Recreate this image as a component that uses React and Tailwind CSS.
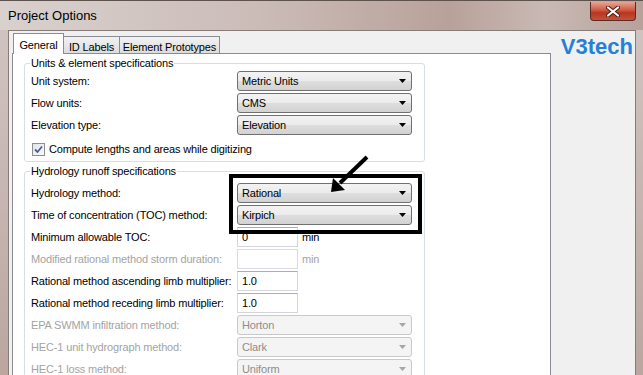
import React from 'react';

function Select({ value, disabled }) {
    return (
        <div
            className={`w-[175px] h-[20px] shrink-0 rounded-[3px] border flex items-center justify-between pl-[4px] pr-[5px] ${
                disabled
                    ? 'border-[#c9c9c9] bg-[#f4f4f4] text-[#8d8d8d]'
                    : 'border-[#707070] bg-[linear-gradient(to_bottom,#f3f3f3_0%,#ebebeb_50%,#dedede_50%,#d2d2d2_100%)] text-black'
            }`}
        >
            <span>{value}</span>
            <svg width="7" height="4" viewBox="0 0 7 4">
                <path d="M0 0h7L3.5 4z" fill={disabled ? '#a6a6a6' : '#000'} />
            </svg>
        </div>
    );
}

function Field({ value, disabled }) {
    return (
        <div
            className={`w-[61px] h-[20px] shrink-0 border pl-[4px] flex items-center bg-white ${
                disabled ? 'border-[#d9dce0]' : 'border-[#d3d7dd] border-t-[#abadb3]'
            }`}
        >
            {value}
        </div>
    );
}

function Row({ label, disabled, children }) {
    return (
        <div className="flex items-center h-[20px] whitespace-nowrap">
            <span className={`w-[206px] shrink-0 ${disabled ? 'text-[#a3a3a3]' : 'text-black'}`}>{label}</span>
            {children}
        </div>
    );
}

function Group({ title, className, children }) {
    return (
        <div className={`w-[401px] border border-[#d5dfe5] rounded-[3px] pl-[6px] ${className}`}>
            <div className="-mt-[7px] -ml-[1px] w-fit bg-white px-[1px] leading-[13px]">{title}</div>
            {children}
        </div>
    );
}

export default function App() {
    return (
        <div className="relative w-[643px] h-[375px] overflow-hidden flex flex-col bg-[linear-gradient(to_bottom,#d2c6c2,#bba6a0)] border-t border-[#5e524e] font-['Liberation_Sans',Arial,sans-serif] text-[11px] tracking-[-0.15px] text-black">
            {/* title bar */}
            <div className="h-[29px] shrink-0 flex items-start justify-between pl-[8px] pr-[7px] bg-[linear-gradient(to_right,#d9d1ce_0%,#cbbcb7_40%,#b9a19b_70%,#c9b9b4_85%,#b7a19b_100%)]">
                <span className="mt-[5px] text-[13px] tracking-normal text-black">Project Options</span>
                <div className="w-[46px] h-[19px] mt-[1px] rounded-b-[4px] border border-t-0 border-[#5a2a22] bg-[linear-gradient(to_bottom,#e6a595_0%,#cf5a43_45%,#b93520_60%,#c4533c_100%)] flex items-center justify-center">
                    <svg width="14" height="11" viewBox="0 0 14 11">
                        <path d="M2 1.5 L12 9.5 M12 1.5 L2 9.5" stroke="#4a1a14" strokeWidth="4" strokeLinecap="round" />
                        <path d="M2 1.5 L12 9.5 M12 1.5 L2 9.5" stroke="#fff" strokeWidth="2.2" strokeLinecap="round" />
                    </svg>
                </div>
            </div>

            {/* frame sides + client area */}
            <div className="flex-1 flex pl-[8px] pr-[7px]">
                <div className="flex-1 flex bg-[#f0f0f0] border-l border-t border-r border-[#877b77] pl-[3px] pt-[2px]">
                    {/* tab control */}
                    <div className="w-[539px] flex flex-col">
                        <div className="h-[20px] flex items-end pl-[1px] whitespace-nowrap">
                            <div className="relative z-10 w-[51px] h-[21px] -mb-px pt-[3px] text-center border border-b-0 border-[#898c95] bg-white">
                                General
                            </div>
                            <div className="w-[56px] h-[17px] pt-[2px] text-center border border-l-0 border-b-0 border-[#898c95] bg-[linear-gradient(to_bottom,#f2f2f2,#dcdcdc)]">
                                ID Labels
                            </div>
                            <div className="w-[100px] h-[17px] pt-[2px] text-center border border-l-0 border-b-0 border-[#898c95] bg-[linear-gradient(to_bottom,#f2f2f2,#dcdcdc)]">
                                Element Prototypes
                            </div>
                        </div>
                        <div className="flex-1 bg-white border border-b-0 border-[#898c95] pl-[11px] pt-[9px]">
                            <Group title="Units & element specifications" className="pb-[2px]">
                                <div className="mt-[1px] flex flex-col gap-[2px]">
                                    <Row label="Unit system:">
                                        <Select value="Metric Units" />
                                    </Row>
                                    <Row label="Flow units:">
                                        <Select value="CMS" />
                                    </Row>
                                    <Row label="Elevation type:">
                                        <Select value="Elevation" />
                                    </Row>
                                </div>
                                <div className="mt-[4px] h-[20px] flex items-center gap-[4px] pl-[1px]">
                                    <div className="w-[13px] h-[13px] border border-[#8e8f8f] bg-[linear-gradient(to_bottom_right,#e0e4ea,#fbfbfb)] flex items-center justify-center">
                                        <svg width="9" height="9" viewBox="0 0 9 9">
                                            <path d="M1 4.5 L3.5 7 L8 1.5" stroke="#4a5f97" strokeWidth="1.8" fill="none" />
                                        </svg>
                                    </div>
                                    <span>Compute lengths and areas while digitizing</span>
                                </div>
                            </Group>

                            <Group title="Hydrology runoff specifications" className="mt-[9px] h-[400px]">
                                <div className="mt-[5px] flex flex-col gap-[2px]">
                                    <Row label="Hydrology method:">
                                        <Select value="Rational" />
                                    </Row>
                                    <Row label="Time of concentration (TOC) method:">
                                        <Select value="Kirpich" />
                                    </Row>
                                    <Row label="Minimum allowable TOC:">
                                        <Field value="0" />
                                        <span className="ml-[4px]">min</span>
                                    </Row>
                                    <Row label="Modified rational method storm duration:" disabled>
                                        <Field value="" disabled />
                                        <span className="ml-[4px] text-[#a3a3a3]">min</span>
                                    </Row>
                                    <Row label="Rational method ascending limb multiplier:">
                                        <Field value="1.0" />
                                    </Row>
                                    <Row label="Rational method receding limb multiplier:">
                                        <Field value="1.0" />
                                    </Row>
                                    <Row label="EPA SWMM infiltration method:" disabled>
                                        <Select value="Horton" disabled />
                                    </Row>
                                    <Row label="HEC-1 unit hydrograph method:" disabled>
                                        <Select value="Clark" disabled />
                                    </Row>
                                    <Row label="HEC-1 loss method:" disabled>
                                        <Select value="Uniform" disabled />
                                    </Row>
                                </div>
                            </Group>
                        </div>
                    </div>

                    {/* logo */}
                    <div className="flex-1 flex justify-end pr-[2px] pt-[1px]">
                        <span className="text-[22px] font-bold tracking-normal leading-[26px] text-[#2580d6]">
                            V3tech
                        </span>
                    </div>
                </div>
            </div>

            {/* annotation overlay */}
            <div className="absolute left-[229px] top-[173px] w-[193px] h-[60px] border-[4px] border-black pointer-events-none" />
            <svg className="absolute left-0 top-0 pointer-events-none" width="643" height="375">
                <line x1="367" y1="156" x2="340" y2="182" stroke="#000" strokeWidth="4" />
                <polygon points="331,191 333,177 345,189" fill="#000" />
            </svg>
        </div>
    );
}
